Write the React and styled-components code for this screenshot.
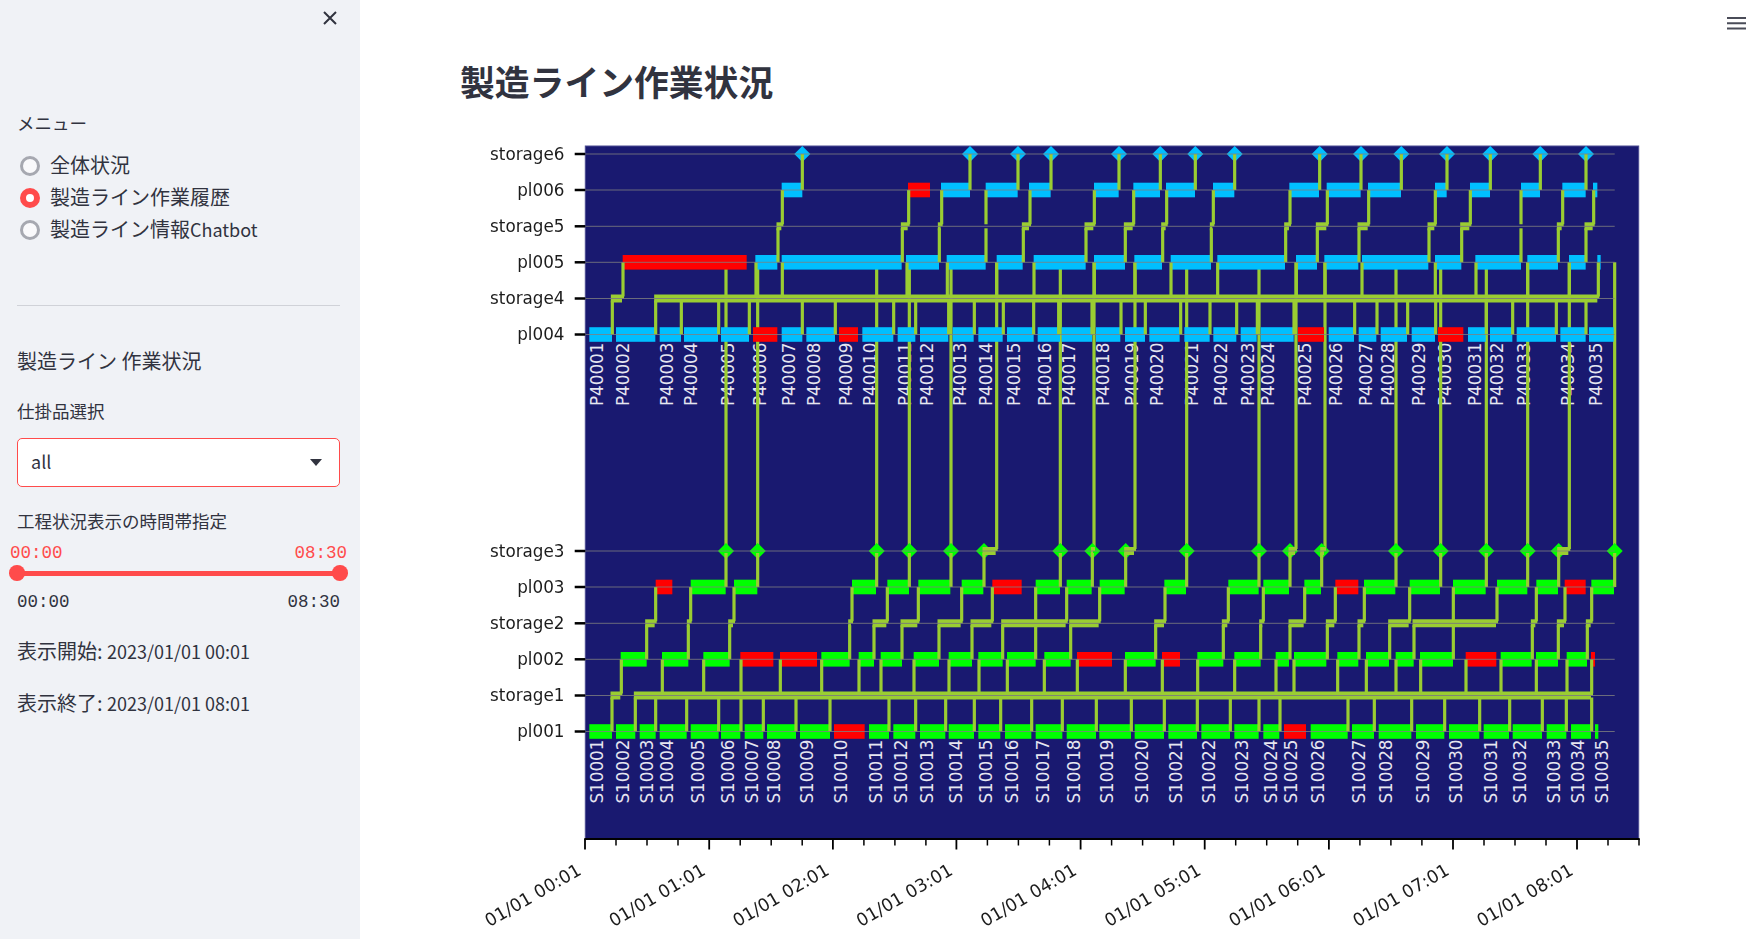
import React from "react";
import styled, { createGlobalStyle } from "styled-components";

const GlobalStyle = createGlobalStyle`
  html, body { margin: 0; padding: 0; height: 939px; overflow: hidden; background: #fff; }
  body { font-family: "Noto Sans CJK JP", sans-serif; color: #31333f; }
`;

const RED = "#ff4b4b";
const Page = styled.div`display: flex; width: 1754px; height: 939px; overflow: hidden;`;
const Sidebar = styled.aside`
  flex: 0 0 360px; box-sizing: border-box; height: 939px; background: #f0f2f6;
  padding: 0 20px 0 17px; display: flex; flex-direction: column;
`;
const CloseRow = styled.div`height: 36px; display: flex; justify-content: flex-end; align-items: center; padding-right: 3px;`;
const MenuLabel = styled.div`margin-top: 74.5px; font-size: 17.5px; line-height: 24px; height: 24px;`;
const RadioList = styled.div`margin-top: 15px; display: flex; flex-direction: column;`;
const RadioItem = styled.div`height: 32.2px; display: flex; align-items: center; gap: 10px; font-size: 20px; white-space: nowrap;`;
const RadioText = styled.span`padding-bottom: 3px;`;
const RadioDot = styled.span`
  box-sizing: border-box; width: 20px; height: 20px; margin-left: 3px; border-radius: 50%;
  border: ${p => (p.$on ? "6px solid " + RED : "3px solid #a6a8b0")};
  background: ${p => (p.$on ? "#fff" : "#f9f9fb")};
`;
const Latin = styled.span`font-size: 18px;`;
const SelectText = styled.span`font-size: 18px; padding-bottom: 3px;`;
const Divider = styled.div`margin-top: 58.6px; height: 1px; flex: none; background: #d0d2d8;`;
const SectionTitle = styled.div`margin-top: 40.2px; font-size: 20px; line-height: 30px; height: 30px; white-space: pre;`;
const FieldLabel = styled.div`margin-top: ${p => p.$top}px; font-size: 17.5px; line-height: 24px; height: 24px;`;
const SelectBox = styled.div`
  margin-top: 15.3px; height: 49.5px; box-sizing: border-box; flex: none; background: #fff;
  border: 1px solid ${RED}; border-radius: 5px; display: flex; align-items: center;
  justify-content: space-between; padding: 0 17px 0 13px;
`;
const ValueRow = styled.div`
  margin: 9.6px -7px 0; height: 20px; display: flex; justify-content: space-between;
  font-family: "Liberation Mono", monospace; font-size: 17.5px; line-height: 20px; color: ${RED};
`;
const Track = styled.div`margin-top: 7.5px; height: 5px; flex: none; position: relative; background: ${RED}; border-radius: 3px;`;
const Thumb = styled.span`
  position: absolute; top: -5.2px; width: 15.5px; height: 15.5px; border-radius: 50%; background: ${RED};
  ${p => (p.$end ? "right: -7.7px;" : "left: -7.7px;")}
`;
const TickRow = styled.div`
  margin-top: 16.5px; height: 20px; display: flex; justify-content: space-between;
  font-family: "Liberation Mono", monospace; font-size: 17.5px; line-height: 20px; color: #31333f;
`;
const InfoLine = styled.div`margin-top: ${p => p.$top}px; font-size: 20px; line-height: 28px; height: 28px; white-space: pre;`;
const Main = styled.main`flex: 1; position: relative; padding-left: 100px;`;
const Title = styled.h1`margin: 58px 0 26px; font-size: 34.8px; line-height: 46px; height: 46px; font-weight: 700; color: #31333f;`;
const MenuButton = styled.div`position: absolute; top: 11px; right: 7px; width: 20px; height: 13px;`;
const ChartSvg = styled.svg`display: block; filter: blur(0.35px);`;
const YLabel = styled.text`font-family: "DejaVu Sans", sans-serif; font-size: 16.8px; fill: #1c1c1c; text-anchor: end;`;
const BarLabel = styled.text`font-family: "DejaVu Sans", sans-serif; font-size: 16.8px; fill: #e6e6f0; text-anchor: end;`;
const XLabel = styled.text`font-family: "DejaVu Sans", sans-serif; font-size: 17.7px; fill: #1c1c1c; text-anchor: end;`;

const a = x => 470 + x / 3;
const b = x => 870 + x / 3;
const c = x => 1270 + x / 3;

const ROW = { s6: 154, p6: 190, s5: 226.3, p5: 262.3, s4: 298.5, p4: 334.5, s3: 551, p3: 587, s2: 623.3, p2: 659.3, s1: 695.5, p1: 731.5 };
const LINE = "#9acd32";
const OFF = 2;

// [start, end, isDefect]
const p4Bars = [
  [a(358), a(426)], [a(438), a(556)], [a(569), a(633)], [a(642), a(744)], [a(753), a(837)], [a(849), a(922), 1],
  [a(935), a(997)], [a(1009), a(1095)], [a(1107), a(1164), 1], [a(1177), b(70)], [b(83), b(136)], [b(150), b(235)],
  [b(248), b(311)], [b(325), b(398)], [b(411), b(491)], [b(503), b(570)], [b(575), b(666)], [b(678), b(751)],
  [b(765), b(825)], [b(838), b(929)], [b(943), b(1019)], [b(1030), b(1099)], [b(1112), b(1160)], [b(1172), c(71)],
  [c(84), c(162), 1], [c(176), c(252)], [c(266), c(319)], [c(332), c(411)], [c(425), c(495)], [c(504), c(580), 1],
  [c(594), c(647)], [c(660), c(727)], [c(740), c(858)], [c(871), c(947)], [c(957), c(1031)],
];
const p5Bars = [
  [a(458), a(830), 1], [a(856), a(922)], [a(935), b(95)], [b(108), b(207)], [b(230), b(347)], [b(380), b(458)],
  [b(491), b(647)], [b(672), b(765)], [b(793), b(876)], [b(902), b(1023)], [b(1042), c(45)], [c(78), c(141)],
  [c(163), c(265)], [c(276), c(475)], [c(495), c(574)], [c(616), c(753)], [c(772), c(864)], [c(897), c(947)], [c(982), c(992)],
];
const p6Bars = [
  [a(935), a(997)], [b(114), b(180), 1], [b(213), b(300)], [b(347), b(443)], [b(477), b(542)], [b(672), b(746)],
  [b(790), b(870)], [b(888), b(975)], [b(1029), b(1093)], [c(58), c(147)], [c(170), c(272)], [c(294), c(393)],
  [c(495), c(530)], [c(600), c(660)], [c(753), c(810)], [c(877), c(947)], [c(969), c(982)],
];
const p1Bars = [
  [a(358), a(426)], [a(438), a(496)], [a(509), a(557)], [a(569), a(650)], [a(662), a(746)], [a(753), a(811)],
  [a(824), a(880)], [a(891), a(978)], [a(990), a(1080)], [a(1092), a(1184), 1], [a(1197), b(57)], [b(70), b(136)],
  [b(150), b(226)], [b(236), b(312)], [b(325), b(391)], [b(405), b(484)], [b(497), b(577)], [b(590), b(678)],
  [b(688), b(783)], [b(794), b(882)], [b(895), b(981)], [b(994), b(1080)], [b(1093), b(1166)], [b(1180), c(28)],
  [c(42), c(108), 1], [c(122), c(233)], [c(246), c(312)], [c(326), c(424)], [c(438), c(523)], [c(537), c(628)],
  [c(641), c(717)], [c(728), c(816)], [c(830), c(889)], [c(903), c(963)], [c(975), c(985)],
];
const p2Bars = [
  [a(452), a(530)], [a(576), a(655)], [a(700), a(779)], [a(811), a(910), 1], [a(930), a(1041), 1], [a(1054), a(1139)],
  [a(1166), b(12)], [b(32), b(96)], [b(131), b(207)], [b(236), b(306)], [b(325), b(398)], [b(411), b(497)],
  [b(523), b(602)], [b(621), b(726), 1], [b(765), b(857)], [b(876), b(930), 1], [b(982), b(1060)], [b(1093), b(1172)],
  [c(17), c(57)], [c(72), c(169)], [c(202), c(265)], [c(288), c(357)], [c(377), c(431)], [c(450), c(549)],
  [c(587), c(679), 1], [c(692), c(785)], [c(798), c(864)], [c(890), c(951)], [c(963), c(975), 1],
];
const p3Bars = [
  [a(557), a(607), 1], [a(662), a(767)], [a(792), a(862)], [a(1146), b(18)], [b(52), b(117)], [b(145), b(241)],
  [b(275), b(340)], [b(367), b(455), 1], [b(497), b(570)], [b(590), b(665)], [b(689), b(764)], [b(883), b(948)],
  [b(1075), b(1166)], [b(1180), c(57)], [c(103), c(153)], [c(196), c(265), 1], [c(282), c(376)], [c(419), c(510)],
  [c(549), c(647)], [c(681), c(772)], [c(799), c(864)], [c(884), c(947), 1], [c(964), c(1032)],
];

const s3Hops = [
  [a(768), a(768)], [a(863), a(863)], [b(20), b(20)], [b(118), b(118)], [b(243), b(243)], [b(342), b(380)],
  [b(571), b(571)], [b(667), b(672)], [b(767), b(795)], [b(950), b(950)], [b(1167), b(1167)], [c(60), c(78)],
  [c(155), c(165)], [c(378), c(378)], [c(512), c(512)], [c(649), c(649)], [c(773), c(773)], [c(866), c(898)], [c(1034), c(1034)],
];
const s1Lower = [
  ...[426, 496, 557, 650, 746, 813, 880, 978, 1080].map(a),
  ...[57, 137, 227, 313, 392, 485, 577, 679, 784, 883, 982, 1081, 1167].map(b),
  ...[30, 234, 313, 425, 524, 629, 719, 817, 889, 965].map(c),
];
const s1Upper = [
  ...[454, 577, 701, 813, 931, 1055, 1167].map(a),
  ...[33, 132, 237, 327, 412, 523, 622, 766, 877, 983, 1094].map(b),
  ...[18, 72, 203, 289, 378, 452, 588, 693, 799, 891, 965].map(c),
];
const s2Pairs = [
  [a(530), a(557)], [a(655), a(662)], [a(779), a(792)], [a(1139), a(1146)],
  [b(12), b(52)], [b(96), b(145)], [b(207), b(275)], [b(306), b(367)], [b(398), b(590)], [b(602), b(689)],
  [b(857), b(885)], [b(1060), b(1075)], [b(1172), b(1180)],
  [c(60), c(104)], [c(172), c(196)], [c(267), c(283)], [c(359), c(419)], [c(432), c(681)], [c(787), c(799)],
  [c(865), c(885)], [c(952), c(965)],
];
const s2Extra = [b(497), c(550)];
const s4Lower = [
  ...[427, 557, 634, 746, 838, 997, 1096].map(a),
  ...[71, 137, 236, 313, 400, 491, 566, 666, 753, 826, 932, 1020, 1100, 1162].map(b),
  ...[72, 254, 321, 413, 497, 649, 728, 859, 948].map(c),
];
const s4Upper = [
  ...[459, 858, 937].map(a),
  ...[111, 232, 380, 492, 673, 795, 903, 1043].map(b),
  ...[79, 165, 276, 496, 618, 773, 898, 985].map(c),
];
const s5Pairs = [
  [a(924), a(937)], [b(97), b(116)], [b(208), b(215)], [b(348), b(348)], [b(460), b(480)], [b(648), b(673)],
  [b(766), b(791)], [b(878), b(890)], [b(1024), b(1030)], [c(47), c(60)], [c(142), c(172)], [c(267), c(296)],
  [c(477), c(496)], [c(575), c(601)], [c(753), c(753)], [c(865), c(878)], [c(948), c(971)],
];
const s6Marks = [a(997), ...[300, 444, 543, 747, 871, 976, 1094].map(b), ...[149, 273, 394, 531, 661, 811, 948].map(c)];

const fillOf = (bar, color) => (bar[2] ? "#ff0000" : color);

const Bars = ({ data, row, color }) =>
  data.map((bar, i) => (
    <rect key={i} x={bar[0]} y={ROW[row] - 7.3} width={bar[1] - bar[0]} height={14.6} fill={fillOf(bar, color)} />
  ));

const Labels = ({ data, row, prefix }) =>
  data.map((bar, i) => {
    const x = bar[0] + 13.4;
    const y = ROW[row] + 8;
    return (
      <BarLabel key={i} x={x} y={y} transform={`rotate(-90 ${x} ${y})`}>
        {prefix + String(i + 1).padStart(2, "0")}
      </BarLabel>
    );
  });

const Seg = ({ x1, y1, x2, y2, w = 3.2 }) => <line x1={x1} y1={y1} x2={x2} y2={y2} stroke={LINE} strokeWidth={w} />;

const Verticals = ({ xs, y1, y2 }) => xs.map((x, i) => <Seg key={i} x1={x} x2={x} y1={y1} y2={y2} />);

const Bands = ({ pairs, y }) =>
  pairs
    .filter(([x0, x1]) => x1 > x0)
    .map(([x0, x1], i) => (
      <g key={i}>
        <Seg w={4} x1={x0 - 1.5} x2={x1 + 1} y1={y - OFF} y2={y - OFF} />
        <Seg w={4} x1={x0 - 1.5} x2={x1 - 1} y1={y + OFF} y2={y + OFF} />
      </g>
    ));

const Diamonds = ({ xs, y, color }) =>
  xs.map((x, i) => <polygon key={i} points={`${x - 8},${y} ${x},${y - 8} ${x + 8},${y} ${x},${y + 8}`} fill={color} />);

const rows = ["s6", "p6", "s5", "p5", "s4", "p4", "s3", "p3", "s2", "p2", "s1", "p1"];
const rowNames = { s6: "storage6", p6: "pl006", s5: "storage5", p5: "pl005", s4: "storage4", p4: "pl004", s3: "storage3", p3: "pl003", s2: "storage2", p2: "pl002", s1: "storage1", p1: "pl001" };

const PLOT = { left: 585.3, right: 1638.7, top: 146, bottom: 839, gridRight: 1614.7 };
const majorTicks = [585, 709.2, 832.9, 956.4, 1080.6, 1204.7, 1328.9, 1453, 1577];
const minorTicks = majorTicks.flatMap(x => [1, 2, 3].map(k => x + 31 * k)).filter(x => x < 1640);
const tickTimes = ["00:01", "01:01", "02:01", "03:01", "04:01", "05:01", "06:01", "07:01", "08:01"];

const Chart = () => (
  <ChartSvg width="1294" height="809" viewBox="460 130 1294 809">
    <rect x={PLOT.left} y={PLOT.top} width={PLOT.right - PLOT.left} height={PLOT.bottom - PLOT.top} fill="#191970" stroke="#4c4c92" strokeWidth="1" />
    <Labels data={p4Bars} row="p4" prefix="P400" />
    <Labels data={p1Bars} row="p1" prefix="S100" />

    <Verticals xs={s3Hops.map(h => h[1])} y1={ROW.s3 - OFF} y2={ROW.p5} />
    <Bars data={p4Bars} row="p4" color="#00bfff" />
    <Bars data={p5Bars} row="p5" color="#00bfff" />
    <Bars data={p6Bars} row="p6" color="#00bfff" />
    <Bars data={p1Bars} row="p1" color="#00ff00" />
    <Bars data={p2Bars} row="p2" color="#00ff00" />
    <Bars data={p3Bars} row="p3" color="#00ff00" />
    <Diamonds xs={s6Marks} y={ROW.s6} color="#00bfff" />
    <Diamonds xs={s3Hops.map(h => h[0])} y={ROW.s3} color="#00ff00" />

    <Verticals xs={s1Lower} y1={ROW.p1} y2={ROW.s1 + OFF} />
    <Verticals xs={s1Upper} y1={ROW.s1 - OFF} y2={ROW.p2} />
    <Bands pairs={[[a(426), a(454)]]} y={ROW.s1} />
    <Bands pairs={[[a(496), c(966)]]} y={ROW.s1} />

    <Verticals xs={s2Pairs.map(p => p[0]).concat(s2Extra)} y1={ROW.p2} y2={ROW.s2 + OFF} />
    <Verticals xs={s2Pairs.map(p => p[1]).concat(s2Extra)} y1={ROW.s2 - OFF} y2={ROW.p3} />
    <Bands pairs={s2Pairs} y={ROW.s2} />

    <Verticals xs={s3Hops.map(h => h[0])} y1={ROW.p3} y2={ROW.s3 + OFF} />
    <Bands pairs={s3Hops} y={ROW.s3} />

    <Verticals xs={s4Lower} y1={ROW.p4} y2={ROW.s4 + OFF} />
    <Verticals xs={s4Upper} y1={ROW.s4 - OFF} y2={ROW.p5} />
    <Bands pairs={[[a(427), a(459)]]} y={ROW.s4} />
    <Bands pairs={[[a(557), c(985)]]} y={ROW.s4} />

    <Verticals xs={s5Pairs.map(p => p[0])} y1={ROW.p5} y2={ROW.s5 + OFF} />
    <Verticals xs={s5Pairs.map(p => p[1])} y1={ROW.s5 - OFF} y2={ROW.p6} />
    <Bands pairs={s5Pairs} y={ROW.s5} />

    <Verticals xs={s6Marks} y1={ROW.p6} y2={ROW.s6} />

    {rows.map(r => (
      <g key={r}>
        <line x1={PLOT.left} x2={PLOT.gridRight} y1={ROW[r]} y2={ROW[r]} stroke="#808080" strokeWidth="1" opacity="0.8" />
        <line x1={574.7} x2={PLOT.left} y1={ROW[r]} y2={ROW[r]} stroke="#000" strokeWidth="2.5" />
        <YLabel x={564.5} y={ROW[r] + 5.5}>{rowNames[r]}</YLabel>
      </g>
    ))}

    <line x1={PLOT.left - 1} x2={PLOT.right + 1} y1={PLOT.bottom} y2={PLOT.bottom} stroke="#000" strokeWidth="2" />
    {minorTicks.map(x => (
      <line key={x} x1={x} x2={x} y1={PLOT.bottom} y2={845.5} stroke="#000" strokeWidth="1.5" />
    ))}
    {majorTicks.map((x, i) => (
      <g key={x}>
        <line x1={x} x2={x} y1={PLOT.bottom} y2={849.5} stroke="#000" strokeWidth="1.8" />
        <XLabel x={x - 2.5} y={873.5} transform={`rotate(-30 ${x - 2.5} 873.5)`}>{"01/01 " + tickTimes[i]}</XLabel>
      </g>
    ))}
  </ChartSvg>
);

export default function App() {
  return (
    <Page>
      <GlobalStyle />
      <Sidebar>
        <CloseRow>
          <svg width="14" height="14" viewBox="0 0 14 14">
            <path d="M1 1 L13 13 M13 1 L1 13" stroke="#31333f" strokeWidth="2" fill="none" />
          </svg>
        </CloseRow>
        <MenuLabel>メニュー</MenuLabel>
        <RadioList>
          <RadioItem><RadioDot /><RadioText>全体状況</RadioText></RadioItem>
          <RadioItem><RadioDot $on /><RadioText>製造ライン作業履歴</RadioText></RadioItem>
          <RadioItem><RadioDot /><RadioText>製造ライン情報<Latin>Chatbot</Latin></RadioText></RadioItem>
        </RadioList>
        <Divider />
        <SectionTitle>製造ライン 作業状況</SectionTitle>
        <FieldLabel $top={22.8}>仕掛品選択</FieldLabel>
        <SelectBox>
          <SelectText>all</SelectText>
          <svg width="12" height="7" viewBox="0 0 12 7"><polygon points="0,0 12,0 6,7" fill="#31333f" /></svg>
        </SelectBox>
        <FieldLabel $top={22}>工程状況表示の時間帯指定</FieldLabel>
        <ValueRow><span>00:00</span><span>08:30</span></ValueRow>
        <Track><Thumb /><Thumb $end /></Track>
        <TickRow><span>00:00</span><span>08:30</span></TickRow>
        <InfoLine $top={24.9}>表示開始: <Latin>2023/01/01 00:01</Latin></InfoLine>
        <InfoLine $top={23.6}>表示終了: <Latin>2023/01/01 08:01</Latin></InfoLine>
      </Sidebar>
      <Main>
        <MenuButton>
          <svg width="20" height="13" viewBox="0 0 20 13">
            <path d="M0 1 H19 M0 6.3 H19 M0 11.6 H19" stroke="#4a4c58" strokeWidth="2" fill="none" />
          </svg>
        </MenuButton>
        <Title>製造ライン作業状況</Title>
        <Chart />
      </Main>
    </Page>
  );
}
